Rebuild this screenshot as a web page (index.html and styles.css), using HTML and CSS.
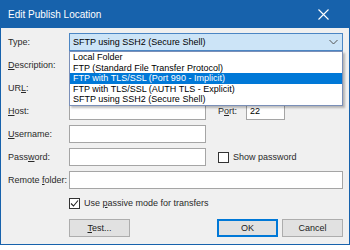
FILE: index.html
```html
<html lang="en">
<head>
    <meta charset="UTF-8">
    <title>Edit Publish Location</title>
    <link rel="stylesheet" href="styles.css">
</head>
<body>
    <div class="window">
        <div class="titlebar">
            <span class="title">Edit Publish Location</span>
            <svg class="close" width="11" height="11" viewBox="0 0 11 11">
                <path d="M0.5 0.5 L10.5 10.5 M10.5 0.5 L0.5 10.5" stroke="#fff" stroke-width="1.1" fill="none"/>
            </svg>
        </div>
        <div class="client">
            <div class="form">
                <label class="lbl">Type:</label>
                <div class="combo-wrap">
                    <div class="combo">
                        <span>SFTP using SSH2 (Secure Shell)</span>
                        <svg width="9" height="6" viewBox="0 0 9 6">
                            <path d="M0.5 1 L4.5 5 L8.5 1" stroke="#555" stroke-width="1" fill="none"/>
                        </svg>
                    </div>
                    <div class="droplist">
                        <div class="item">Local Folder</div>
                        <div class="item">FTP (Standard File Transfer Protocol)</div>
                        <div class="item selected">FTP with TLS/SSL (Port 990 - Implicit)</div>
                        <div class="item">FTP with TLS/SSL (AUTH TLS - Explicit)</div>
                        <div class="item">SFTP using SSH2 (Secure Shell)</div>
                    </div>
                </div>

                <label class="lbl"><u>D</u>escription:</label>
                <div class="field"></div>

                <label class="lbl">UR<u>L</u>:</label>
                <div class="field"></div>

                <label class="lbl"><u>H</u>ost:</label>
                <div class="row">
                    <div class="field short"></div>
                    <label class="lbl side">P<u>o</u>rt:</label>
                    <div class="field port">22</div>
                </div>

                <label class="lbl"><u>U</u>sername:</label>
                <div class="row">
                    <div class="field short"></div>
                </div>

                <label class="lbl">Pass<u>w</u>ord:</label>
                <div class="row">
                    <div class="field short"></div>
                    <div class="check-line side">
                        <span class="box"></span>
                        <span>Show password</span>
                    </div>
                </div>

                <label class="lbl">Remote <u>f</u>older:</label>
                <div class="field"></div>

                <div></div>
                <div class="check-line">
                    <span class="box">
                        <svg width="9" height="9" viewBox="0 0 9 9">
                            <path d="M1 4.5 L3.5 7 L8 1.5" stroke="#222" stroke-width="1.1" fill="none"/>
                        </svg>
                    </span>
                    <span>Use <u>p</u>assive mode for transfers</span>
                </div>

                <div></div>
                <div class="buttons">
                    <button class="btn"><u>T</u>est...</button>
                    <div class="spacer"></div>
                    <button class="btn default">OK</button>
                    <button class="btn">Cancel</button>
                </div>
            </div>
        </div>
    </div>
</body>
</html>
```

FILE: styles.css
```css
body {
    margin: 0;
    background-color: #ffffff;
    font-family: "Liberation Sans", Arial, sans-serif;
    font-size: 9px;
    color: #000;
}
.window {
    width: 350px;
    height: 245px;
    box-sizing: border-box;
    border: 1px solid #1762ac;
    border-top: none;
    display: flex;
    flex-direction: column;
}
.titlebar {
    height: 28px;
    margin: 0 -1px;
    background-color: #1762ac;
    color: #fff;
    display: flex;
    align-items: center;
    justify-content: space-between;
    padding: 0 21px 0 8px;
}
.title {
    font-size: 10px;
}
.client {
    flex: 1;
    background-color: #f0f0f0;
    padding: 5px 6px 0 7px;
}
.form {
    display: grid;
    grid-template-columns: 61px 1fr;
    grid-auto-rows: 18px;
    row-gap: 5px;
    align-items: center;
}
.lbl {
    color: #2a2a2a;
    white-space: nowrap;
}
.combo-wrap {
    position: relative;
    height: 18px;
}
.combo {
    height: 18px;
    box-sizing: border-box;
    background-color: #cce4f7;
    border: 1px solid #4b86c4;
    display: flex;
    align-items: center;
    justify-content: space-between;
    padding: 0 4px 0 3px;
}
.droplist {
    position: absolute;
    top: 18px;
    left: 0;
    right: 0;
    background-color: #fff;
    border: 1px solid #7a8fb8;
    box-shadow: 2px 2px 2px rgba(0,0,0,0.25);
    z-index: 2;
}
.item {
    height: 10.5px;
    line-height: 10.5px;
    padding-left: 3px;
    white-space: nowrap;
}
.item.selected {
    background-color: #0078d7;
    color: #fff;
}
.field {
    height: 18px;
    box-sizing: border-box;
    background-color: #fff;
    border: 1px solid #a5a5a5;
    padding: 0 3px;
    line-height: 16px;
}
.row {
    display: flex;
    align-items: center;
}
.field.short {
    width: 137px;
}
.side {
    margin-left: 12px;
}
.field.port {
    width: 39px;
    margin-left: 9px;
}
.check-line {
    display: flex;
    align-items: center;
    gap: 4px;
    color: #2a2a2a;
}
.box {
    width: 11px;
    height: 11px;
    box-sizing: border-box;
    border: 1px solid #333;
    background-color: #fff;
    display: flex;
    align-items: center;
    justify-content: center;
}
.buttons {
    display: flex;
    gap: 4px;
    margin-top: 4px;
}
.spacer {
    flex: 1;
}
.btn {
    width: 61px;
    height: 18px;
    background-color: #e1e1e1;
    border: 1px solid #adadad;
    font-family: "Liberation Sans", Arial, sans-serif;
    font-size: 9px;
    color: #222;
    padding: 0;
}
.btn.default {
    border-color: #0078d7;
    box-shadow: inset 0 0 0 1px #0078d7;
}
```
